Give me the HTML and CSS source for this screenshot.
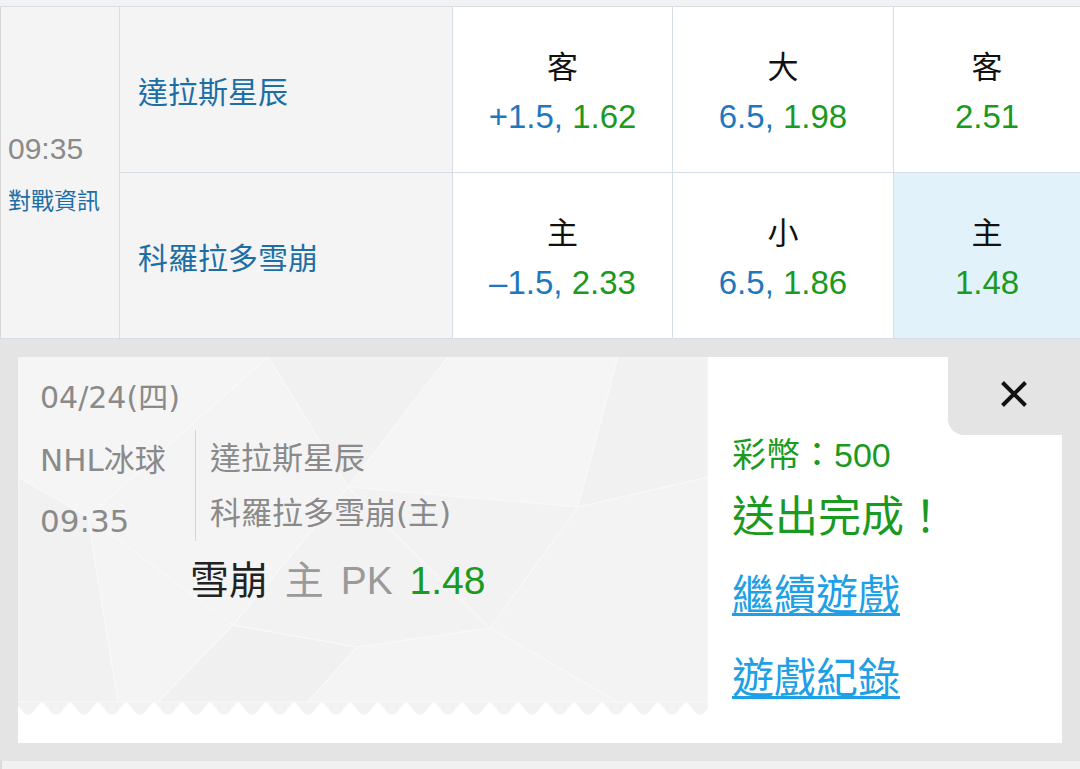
FILE: index.html
```html
<!DOCTYPE html>
<html lang="zh-Hant">
<head>
    <meta charset="UTF-8">
    <meta name="viewport" content="width=device-width, initial-scale=1.0">
    <title>NHL冰球 - 投注完成</title>
    <link rel="stylesheet" href="styles.css">
</head>
<body>
    <div class="top-strip"></div>

    <!-- Match Row -->
    <div class="match">
        <div class="match-time">
            <span class="time">09:35</span>
            <a class="info-link" href="#">對戰資訊</a>
        </div>

        <div class="team">達拉斯星辰</div>
        <div class="odd">
            <span class="label">客</span>
            <span class="value"><span class="line">+1.5,</span> <span class="price">1.62</span></span>
        </div>
        <div class="odd">
            <span class="label">大</span>
            <span class="value"><span class="line">6.5,</span> <span class="price">1.98</span></span>
        </div>
        <div class="odd">
            <span class="label">客</span>
            <span class="value"><span class="price">2.51</span></span>
        </div>

        <div class="team">科羅拉多雪崩</div>
        <div class="odd">
            <span class="label">主</span>
            <span class="value"><span class="line">–1.5,</span> <span class="price">2.33</span></span>
        </div>
        <div class="odd">
            <span class="label">小</span>
            <span class="value"><span class="line">6.5,</span> <span class="price">1.86</span></span>
        </div>
        <div class="odd selected">
            <span class="label">主</span>
            <span class="value"><span class="price">1.48</span></span>
        </div>
    </div>

    <!-- Bet Slip -->
    <section class="slip-area">
        <div class="ticket">
            <div class="ticket-main">
                <svg class="ticket-bg" viewBox="0 0 690 386" preserveAspectRatio="none">
                    <defs>
                        <pattern id="teeth" width="28" height="16" x="-4" y="344" patternUnits="userSpaceOnUse">
                            <path d="M0 0H28L19 11Q14 16.5 9 11Z" fill="#f2f2f2"/>
                        </pattern>
                    </defs>
                    <rect width="690" height="345" fill="#f2f2f2"/>
                    <rect y="344" width="690" height="16" fill="url(#teeth)"/>
                    <!-- low-poly facets -->
                    <g stroke="#f8f8f8" stroke-width="1.2">
                        <polygon points="0,0 250,0 70,160 0,120" fill="#f5f5f5"/>
                        <polygon points="250,0 430,0 330,130" fill="#f1f1f1"/>
                        <polygon points="70,160 250,0 330,130 215,268" fill="#f4f4f4"/>
                        <polygon points="0,120 70,160 100,345 0,345" fill="#f1f1f1"/>
                        <polygon points="70,160 215,268 140,345 100,345" fill="#f4f4f4"/>
                        <polygon points="215,268 339,290 290,345 140,345" fill="#f0f0f0"/>
                        <polygon points="330,130 472,271 339,290 215,268" fill="#f2f2f2"/>
                        <polygon points="430,0 600,0 560,150 330,130" fill="#f5f5f5"/>
                        <polygon points="560,150 690,120 690,345 600,345 472,271" fill="#f3f3f3"/>
                        <polygon points="600,0 690,0 690,120 560,150" fill="#f1f1f1"/>
                        <polygon points="339,290 472,271 600,345 290,345" fill="#f4f4f4"/>
                    </g>
                </svg>

                <div class="ticket-date">04/24(四)</div>
                <div class="ticket-match">
                    <div class="ticket-league">
                        <div>NHL冰球</div>
                        <div>09:35</div>
                    </div>
                    <div class="ticket-teams">
                        <div>達拉斯星辰</div>
                        <div>科羅拉多雪崩(主)</div>
                    </div>
                </div>
                <div class="ticket-pick">
                    <span class="pick-team">雪崩</span>
                    <span class="pick-type">主 PK</span>
                    <span class="price">1.48</span>
                </div>
            </div>

            <div class="ticket-side">
                <div class="close-tab" role="button" aria-label="關閉">
                    <svg width="28" height="28" viewBox="0 0 28 28">
                        <path d="M2.5 2.5L25.5 25.5M25.5 2.5L2.5 25.5" stroke="#111" stroke-width="4"/>
                    </svg>
                </div>
                <div class="coins">彩幣：500</div>
                <div class="done">送出完成！</div>
                <a class="side-link" href="#">繼續遊戲</a>
                <a class="side-link last" href="#">遊戲紀錄</a>
            </div>
        </div>
    </section>

    <div class="next-row"></div>
</body>
</html>
```

FILE: styles.css
```css
/* Global Styles */
* {
    box-sizing: border-box;
}

html,
body {
    margin: 0;
    padding: 0;
}

body {
    width: 1080px;
    height: 769px;
    overflow: hidden;
    font-family: "Liberation Sans", "Noto Sans CJK TC", sans-serif;
    background-color: #e4e4e4;
}

.top-strip {
    height: 7px;
    background-color: #f1f2f4;
    border-bottom: 1px solid #d8dee5;
}

/* Match Row */
.match {
    display: grid;
    grid-template-columns: 118px 332px 219px 220px 1fr;
    grid-template-rows: 165px 165px;
    gap: 1px;
    background-color: #d5dde6;
    border-left: 1px solid #d6d6d6;
    border-bottom: 1px solid #d5dde6;
}

.match-time {
    grid-row: span 2;
    display: flex;
    flex-direction: column;
    justify-content: center;
    padding-left: 7px;
    background-color: #f4f4f4;
}

.time {
    font-size: 30px;
    line-height: 36px;
    color: #8a8a8a;
}

.info-link {
    margin-top: 20px;
    font-size: 23px;
    line-height: 28px;
    color: #1e6ea6;
    text-decoration: none;
}

.team {
    display: flex;
    align-items: center;
    padding-left: 18px;
    font-size: 30px;
    color: #1e6ea6;
    background-color: #f4f4f4;
}

.odd {
    display: flex;
    flex-direction: column;
    align-items: center;
    justify-content: center;
    gap: 9px;
    padding-top: 5px;
    background-color: #fff;
}

.odd.selected {
    background-color: #e1f2fb;
}

.odd .label {
    font-size: 31px;
    line-height: 40px;
    color: #111;
}

.odd .value {
    font-size: 33px;
    line-height: 40px;
}

.line {
    color: #1f78bd;
}

.price {
    color: #1a9a21;
}

/* Bet Slip */
.slip-area {
    padding: 18px 18px 17px;
}

.ticket {
    display: flex;
    height: 386px;
}

.ticket-main {
    position: relative;
    isolation: isolate;
    width: 690px;
    padding: 23px 0 0 22px;
    background-color: #fff;
    color: #8a8a8a;
    font-family: "DejaVu Sans", "Noto Sans CJK TC", sans-serif;
}

.ticket-bg {
    position: absolute;
    top: 0;
    left: 0;
    width: 100%;
    height: 100%;
    z-index: -1;
}

.ticket-date {
    font-size: 30px;
    line-height: 36px;
}

.ticket-match {
    display: flex;
    align-items: flex-start;
    margin-top: 14px;
    font-size: 31px;
}

.ticket-league {
    width: 155px;
    line-height: 61px;
}

.ticket-teams {
    padding: 1px 0 0 14px;
    border-left: 1px solid #d4d4d4;
    line-height: 55px;
}

.ticket-pick {
    margin: 7px 0 0 150px;
    font-family: "Liberation Sans", "Noto Sans CJK TC", sans-serif;
    font-size: 39px;
    line-height: 44px;
    word-spacing: 6px;
}

.pick-team {
    color: #222;
}

.pick-type {
    color: #9a9a9a;
}

.ticket-side {
    flex: 1;
    display: flex;
    flex-direction: column;
    align-items: flex-start;
    padding-left: 24px;
    background-color: #fff;
}

.close-tab {
    align-self: flex-end;
    width: 114px;
    height: 78px;
    padding: 23px 0 0 52px;
    border-bottom-left-radius: 16px;
    background-color: #e4e4e4;
    cursor: pointer;
}

.close-tab svg {
    display: block;
}

.coins {
    font-size: 34px;
    line-height: 40px;
    color: #1a9a21;
}

.done {
    margin-top: 14px;
    font-size: 43px;
    line-height: 56px;
    color: #1a9a21;
}

.side-link {
    margin-top: 25px;
    font-size: 42px;
    line-height: 52px;
    color: #1ea0e6;
    text-decoration: underline;
    text-decoration-thickness: 3px;
    text-underline-offset: 3px;
}

.side-link.last {
    margin-top: 31px;
}

.next-row {
    height: 9px;
    background-color: #f1f1f1;
    border-top: 1px solid #e2e2e2;
    border-left: 2px solid #dcdcdc;
}
```
